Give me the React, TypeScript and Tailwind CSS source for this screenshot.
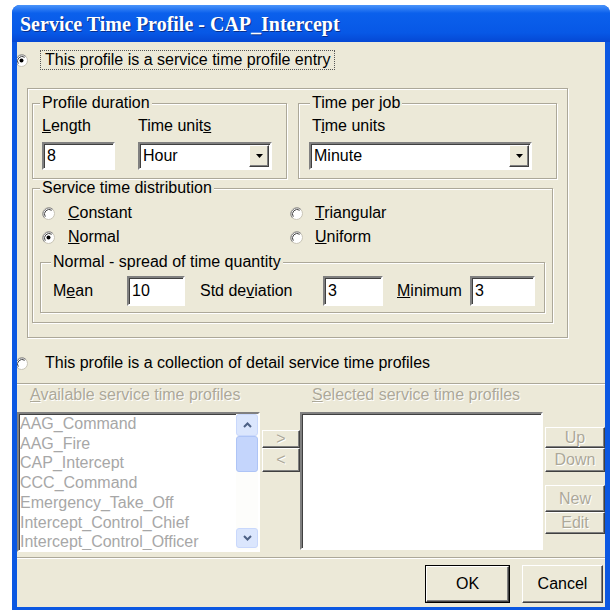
import type { ReactNode } from "react";

const dim = "text-[#aca899] [text-shadow:1px_1px_0_#fff]";
const sunken =
  "border-2 border-t-[#808080] border-l-[#808080] border-r-white border-b-white shadow-[inset_1px_1px_0_#404040]";
const raised =
  "border border-t-white border-l-white border-b-[#404040] border-r-[#404040] shadow-[inset_-1px_-1px_0_#808080] bg-[#ece9d8]";

function Radio({ checked = false }: { checked?: boolean }) {
  return (
    <svg width="13" height="13" viewBox="0 0 13 13" className="shrink-0">
      <circle cx="6.5" cy="6.5" r="6" fill="#fff" stroke="#c8c4b6" />
      <path d="M2.3 10.7A6 6 0 0 1 10.7 2.3" fill="none" stroke="#808080" />
      <path d="M3.3 9.7A4.6 4.6 0 0 1 9.7 3.3" fill="none" stroke="#404040" />
      {checked && <circle cx="6.5" cy="6.5" r="2" fill="#000" />}
    </svg>
  );
}

function Group({
  title,
  className = "",
  labelClass = "ml-[7px]",
  children,
}: {
  title?: ReactNode;
  className?: string;
  labelClass?: string;
  children?: ReactNode;
}) {
  return (
    <div
      className={`border border-[#aca899] shadow-[inset_1px_1px_0_#fff,1px_1px_0_#fff] ${className}`}
    >
      {title && (
        <div className={`-mt-[9px] w-fit bg-[#ece9d8] px-[2px] leading-[16px] ${labelClass}`}>
          {title}
        </div>
      )}
      {children}
    </div>
  );
}

function TextBox({ value, className = "" }: { value: string; className?: string }) {
  return (
    <div className={`flex items-center bg-white pl-[3px] ${sunken} ${className}`}>{value}</div>
  );
}

function Combo({ value, className = "" }: { value: string; className?: string }) {
  return (
    <div className={`flex items-stretch bg-white ${sunken} ${className}`}>
      <span className="flex flex-1 items-center pl-[3px]">{value}</span>
      <span className={`m-[1px] flex w-[20px] items-center justify-center ${raised}`}>
        <svg width="7" height="4" viewBox="0 0 7 4">
          <path d="M0 0h7L3.5 4z" fill="#000" />
        </svg>
      </span>
    </div>
  );
}

function Btn({
  children,
  disabled = false,
  className = "",
}: {
  children: ReactNode;
  disabled?: boolean;
  className?: string;
}) {
  return (
    <div
      className={`flex items-center justify-center ${raised} ${disabled ? dim : ""} ${className}`}
    >
      {children}
    </div>
  );
}

function Chevron({ up }: { up?: boolean }) {
  return (
    <svg width="9" height="6" viewBox="0 0 9 6">
      <path
        d={up ? "M1 5 4.5 1.5 8 5" : "M1 1 4.5 4.5 8 1"}
        fill="none"
        stroke="#4d6185"
        strokeWidth="2"
      />
    </svg>
  );
}

function ScrollBar() {
  return (
    <div className="flex w-[22px] flex-col bg-[#fdfdfb]">
      <div className="flex h-[22px] items-center justify-center rounded-[3px] border border-[#c9d8fc] bg-[#dbe6fd]">
        <Chevron up />
      </div>
      <div className="h-[36px] rounded-[3px] border border-[#aec4f6] bg-[#c4d5fc]" />
      <div className="flex-1" />
      <div className="mb-[2px] flex h-[20px] items-center justify-center rounded-[3px] border border-[#c9d8fc] bg-[#dbe6fd]">
        <Chevron />
      </div>
    </div>
  );
}

const profiles = [
  "AAG_Command",
  "AAG_Fire",
  "CAP_Intercept",
  "CCC_Command",
  "Emergency_Take_Off",
  "Intercept_Control_Chief",
  "Intercept_Control_Officer",
];

export default function App() {
  return (
    <div className="h-[610px] w-[610px] overflow-hidden bg-white pl-[12px] pt-[5px] font-['Liberation_Sans',Arial,sans-serif] text-[16px] text-black">
      <div className="flex h-[605px] w-[598px] flex-col overflow-hidden rounded-t-[8px] bg-[#0b58e2]">
        {/* title bar */}
        <div className="flex h-[37px] shrink-0 items-center bg-[linear-gradient(180deg,#4a94fa_0%,#0b60ec_22%,#0758e6_75%,#0548d4_100%)] pl-[8px] font-['Liberation_Serif',serif] text-[20px] font-bold text-white [text-shadow:1px_1px_0_#0a2f8c]">
          Service Time Profile - CAP_Intercept
        </div>

        <div className="mx-[5px] mb-[3px] flex flex-1 flex-col overflow-hidden bg-[#ece9d8]">
          {/* single profile entry */}
          <div className="mt-[7px] flex h-[22px] items-center">
            <span className="-ml-[2px]">
              <Radio checked />
            </span>
            <span className="ml-[12px] border border-dotted border-[#555] px-[4px] leading-[18px]">
              This profile is a service time profile entry
            </span>
          </div>

          <Group className="ml-[10px] mt-[17px] h-[250px] w-[541px]">
            <div className="mt-[14px] flex h-[76px]">
              <Group title="Profile duration" className="ml-[4px] h-full w-[255px]">
                <div className="mt-[6px] flex gap-[23px] pl-[9px]">
                  <div className="flex flex-col">
                    <span className="leading-[18px]">
                      <u>L</u>ength
                    </span>
                    <TextBox value="8" className="mt-[7px] h-[28px] w-[73px]" />
                  </div>
                  <div className="flex flex-col">
                    <span className="leading-[18px]">
                      Time unit<u>s</u>
                    </span>
                    <Combo value="Hour" className="mt-[7px] h-[28px] w-[134px]" />
                  </div>
                </div>
              </Group>
              <Group
                title="Time per job"
                labelClass="ml-[11px]"
                className="ml-[11px] h-full w-[259px]"
              >
                <div className="mt-[6px] flex flex-col pl-[10px]">
                  <span className="ml-[3px] leading-[18px]">
                    T<u>i</u>me units
                  </span>
                  <Combo value="Minute" className="mt-[7px] h-[28px] w-[223px]" />
                </div>
              </Group>
            </div>

            <Group
              title="Service time distribution"
              className="ml-[4px] mt-[9px] h-[135px] w-[521px]"
            >
              <div className="mt-[6px] grid grid-cols-[248px_1fr] gap-y-[2px] pl-[9px]">
                <div className="flex h-[22px] items-center gap-[13px]">
                  <Radio />
                  <span>
                    <u>C</u>onstant
                  </span>
                </div>
                <div className="flex h-[22px] items-center gap-[12px]">
                  <Radio />
                  <span>
                    <u>T</u>riangular
                  </span>
                </div>
                <div className="flex h-[22px] items-center gap-[13px]">
                  <Radio checked />
                  <span>
                    <u>N</u>ormal
                  </span>
                </div>
                <div className="flex h-[22px] items-center gap-[12px]">
                  <Radio />
                  <span>
                    <u>U</u>niform
                  </span>
                </div>
              </div>

              <Group
                title="Normal - spread of time quantity"
                labelClass="ml-[10px]"
                className="ml-[7px] mt-[14px] h-[51px] w-[505px]"
              >
                <div className="mt-[6px] flex h-[30px] items-center pl-[12px]">
                  <span className="w-[74px]">
                    M<u>e</u>an
                  </span>
                  <TextBox value="10" className="h-full w-[58px]" />
                  <span className="ml-[15px] w-[123px]">
                    Std de<u>v</u>iation
                  </span>
                  <TextBox value="3" className="h-full w-[60px]" />
                  <span className="ml-[14px] w-[73px]">
                    <u>M</u>inimum
                  </span>
                  <TextBox value="3" className="h-full w-[65px]" />
                </div>
              </Group>
            </Group>
          </Group>

          {/* collection of profiles */}
          <div className="mt-[14px] flex h-[22px] items-center">
            <span className="-ml-[2px]">
              <Radio />
            </span>
            <span className="ml-[17px]">
              This profile is a collection of detail service time profiles
            </span>
          </div>

          <div className="mt-[9px] h-[2px] border-t border-b border-t-[#aca899] border-b-white" />

          <div className={`mt-[2px] flex h-[16px] leading-[16px] ${dim}`}>
            <span className="w-[295px] pl-[13px]">
              <u>A</u>vailable service time profiles
            </span>
            <span>
              <u>S</u>elected service time profiles
            </span>
          </div>

          <div className="mt-[9px] flex h-[140px]">
            <div className={`flex w-[243px] bg-white ${sunken}`}>
              <div className="flex-1 overflow-hidden pl-[1px] leading-[19.7px] text-[#a7a7a7]">
                {profiles.map((p) => (
                  <div key={p} className="whitespace-nowrap">
                    {p}
                  </div>
                ))}
              </div>
              <ScrollBar />
            </div>

            <div className="ml-[2px] flex w-[38px] flex-col">
              <Btn disabled className="mt-[18px] h-[18px]">
                &gt;
              </Btn>
              <Btn disabled className="h-[24px]">
                &lt;
              </Btn>
            </div>

            <div className={`h-[138px] w-[243px] bg-white ${sunken}`} />

            <div className="ml-[2px] flex w-[60px] flex-col">
              <Btn disabled className="mt-[15px] h-[21px]">
                Up
              </Btn>
              <Btn disabled className="h-[24px]">
                Down
              </Btn>
              <Btn disabled className="mt-[13px] h-[27px]">
                New
              </Btn>
              <Btn disabled className="h-[22px]">
                Edit
              </Btn>
            </div>
          </div>

          <div className="mt-[5px] h-[2px] border-t border-b border-t-[#aca899] border-b-white" />

          <div className="mt-[6px] flex justify-end gap-[12px] pr-[2px]">
            <div className="h-[38px] w-[85px] border border-black">
              <Btn className="h-full w-full">OK</Btn>
            </div>
            <Btn className="h-[38px] w-[81px]">Cancel</Btn>
          </div>
        </div>
      </div>
    </div>
  );
}
